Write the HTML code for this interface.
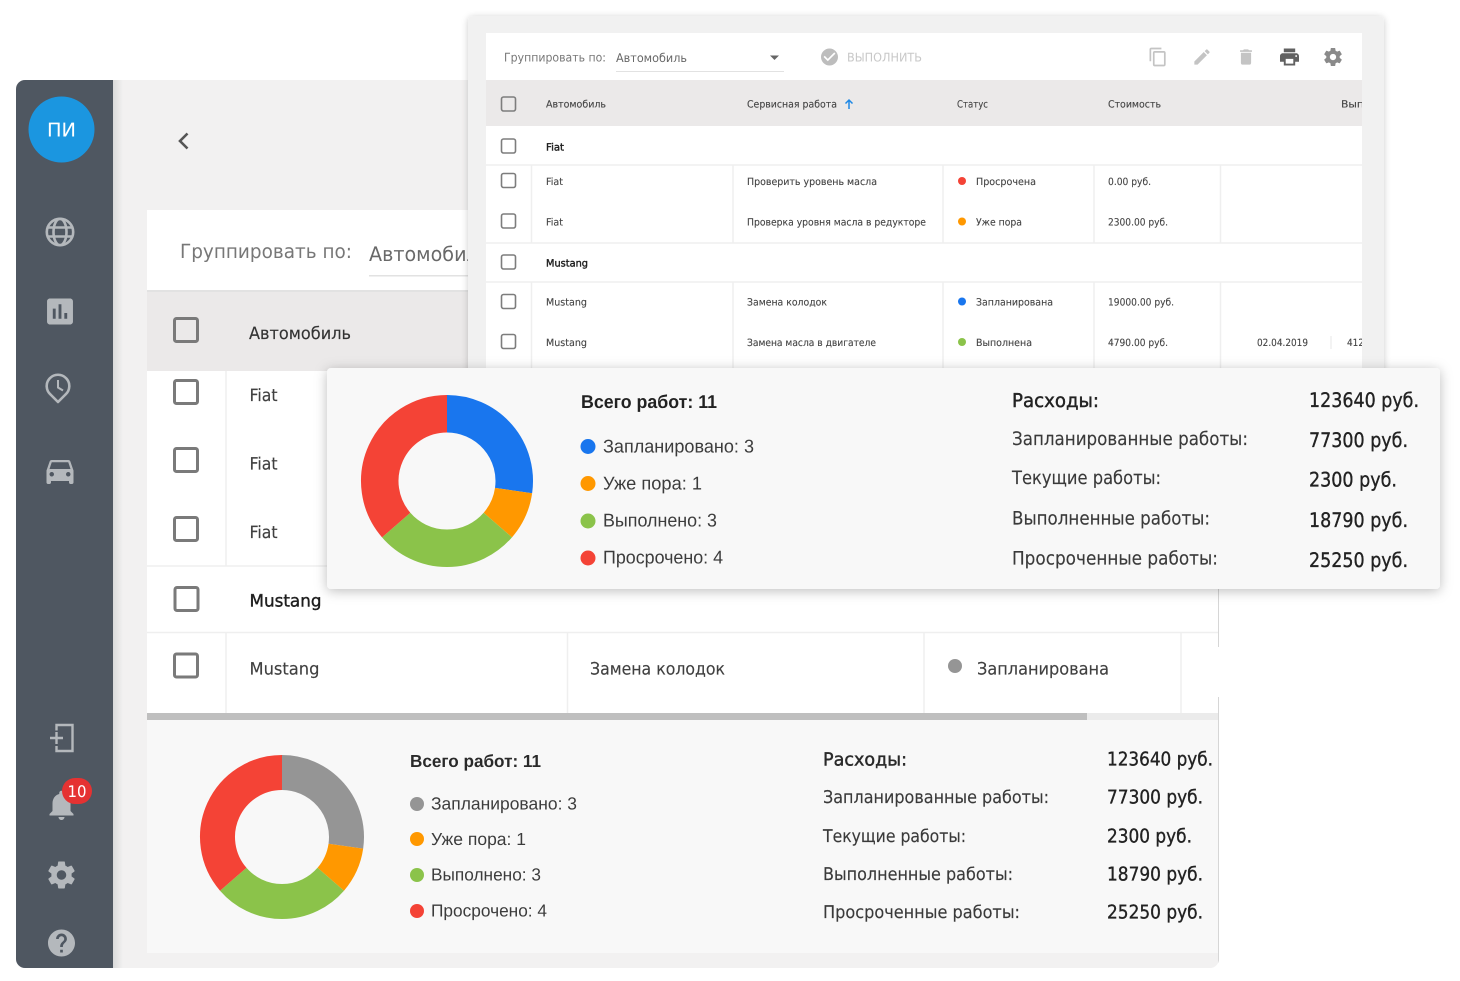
<!DOCTYPE html>
<html lang="ru">
<head>
<meta charset="utf-8">
<title>Работы</title>
<style>
html,body{margin:0;padding:0;background:#fff;width:1460px;height:981px;overflow:hidden}
svg{display:block;filter:blur(.3px)}
text{font-family:"DejaVu Sans","Liberation Sans",sans-serif;fill:#4a4a4a;text-rendering:geometricPrecision}
.h{font-family:"Liberation Sans","DejaVu Sans",sans-serif;fill:#3c3c3c}
.f{font-size:10px;fill:#444;stroke:#444;stroke-width:.12}
.bk{font-size:17px;fill:#404040;stroke:#404040;stroke-width:.15}
.lb{font-size:17.5px;fill:#3a3a3a;stroke:#3a3a3a;stroke-width:.15}
.lb2{font-size:18.5px;fill:#3a3a3a;stroke:#3a3a3a;stroke-width:.15}
.v{font-size:19px;fill:#222;stroke:#222;stroke-width:.35}
.v2{font-size:20px;fill:#222;stroke:#222;stroke-width:.35}
.cb{fill:none;stroke:#7d7d7d;stroke-width:1.6}
.cbb{fill:none;stroke:#7a7a7a;stroke-width:3}
.l{stroke:#efefef;stroke-width:1.5}
.ic{fill:#b4b8bc}
</style>
</head>
<body>
<svg width="1460" height="981" viewBox="0 0 1460 981" xmlns="http://www.w3.org/2000/svg">
<defs>
<filter id="sw" x="-5%" y="-5%" width="110%" height="110%"><feDropShadow dx="0" dy="1" stdDeviation="3.5" flood-color="#000" flood-opacity=".2"/></filter>
<filter id="sp" x="-5%" y="-10%" width="110%" height="120%"><feDropShadow dx="0" dy="2" stdDeviation="6" flood-color="#000" flood-opacity=".26"/></filter>
<linearGradient id="gs" x1="0" x2="1" y1="0" y2="0"><stop offset="0" stop-color="#dadada"/><stop offset="1" stop-color="#f2f1f1"/></linearGradient>
<clipPath id="fc"><rect x="486" y="33" width="876" height="340"/></clipPath>
<clipPath id="bc"><rect x="16" y="80" width="1203" height="888" rx="9"/></clipPath>
</defs>

<!-- BACK WINDOW -->
<g clip-path="url(#bc)">
<rect x="16" y="80" width="1203" height="888" fill="#f2f1f1"/>
<rect x="113" y="80" width="10" height="888" fill="url(#gs)"/>
<rect x="16" y="80" width="97" height="888" fill="#4f5761"/>
<rect x="147" y="210" width="1072" height="743" fill="#fff"/>
<rect x="147" y="290" width="1072" height="2" fill="#e2e2e2"/>
<rect x="147" y="292" width="1072" height="79" fill="#ebe9e9"/>
<rect x="147" y="720" width="1072" height="233" fill="#f8f8f8"/>
<rect x="147" y="713" width="940" height="7" fill="#bfbfbf"/>
<rect x="1087" y="713" width="132" height="7" fill="#ebebeb"/>
<path class="l" d="M147 566H1219M147 632.500H1219M226 371V566M226 633V713M567.500 633V713M924 633V713M1181 633V713" fill="none"/>
<rect x="1218" y="589" width="1" height="58" fill="#d6d6d6"/>
<rect x="1218" y="697" width="1" height="271" fill="#d6d6d6"/>
</g>

<!-- sidebar -->
<circle cx="61.500" cy="129.500" r="33" fill="#1b96e0"/>
<text x="47" y="136.500" font-size="19" textLength="29" lengthAdjust="spacingAndGlyphs" style="fill:#fff">ПИ</text>
<g fill="none" stroke="#b4b8bc" stroke-width="2.600">
<circle cx="60" cy="232" r="13.200"/>
<ellipse cx="60" cy="232" rx="6.500" ry="13.200"/>
<path d="M47.500 227.500H72.500M47.500 236.500H72.500"/>
</g>
<path class="ic" transform="translate(42.720 294.220) scale(1.440)" d="M19 3H5c-1.100 0-2 .9-2 2v14c0 1.100.9 2 2 2h14c1.100 0 2-.9 2-2V5c0-1.100-.9-2-2-2zM9 17H7v-7h2v7zm4 0h-2V7h2v10zm4 0h-2v-4h2v4z"/>
<g fill="none" stroke="#b4b8bc" stroke-width="2.600">
<path d="M58 402 L50.500 394.500 A11.300 11.300 0 1 1 65.500 394.500 Z" stroke-linejoin="round"/>
<path d="M58 380V387.500L63 390.500" stroke-width="2"/>
</g>
<path class="ic" transform="translate(42 452.500) scale(1.500)" d="M18.920 6.010C18.720 5.420 18.160 5 17.500 5h-11c-.66 0-1.210.42-1.420 1.010L3 12v8c0 .55.45 1 1 1h1c.55 0 1-.45 1-1v-1h12v1c0 .55.45 1 1 1h1c.55 0 1-.45 1-1v-8l-2.080-5.990zM6.500 16c-.83 0-1.500-.67-1.500-1.500S5.670 13 6.500 13s1.500.67 1.500 1.500S7.330 16 6.500 16zm11 0c-.83 0-1.500-.67-1.500-1.500s.67-1.500 1.500-1.500 1.500.67 1.500 1.500-.67 1.500-1.500 1.500zM5 11l1.500-4.500h11L19 11H5z"/>
<g fill="none" stroke="#b4b8bc" stroke-width="2.400">
<path d="M56.500 730.500V725H72.500V751H56.500V746"/>
<path d="M50 738H63M56.500 732V744"/>
</g>
<path class="ic" transform="translate(43.500 787) scale(1.500)" d="M12 22c1.100 0 2-.9 2-2h-4c0 1.100.9 2 2 2zm6-6v-5c0-3.070-1.630-5.640-4.500-6.320V4c0-.83-.67-1.500-1.500-1.500s-1.500.67-1.500 1.500v.68C7.640 5.360 6 7.920 6 11v5l-2 2v1h16v-1l-2-2z"/>
<rect x="62" y="778" width="30" height="26" rx="13" fill="#e53232"/>
<text x="67.500" y="797" font-size="16" textLength="19" lengthAdjust="spacingAndGlyphs" style="fill:#fff">10</text>
<path class="ic" transform="translate(45.300 858.800) scale(1.350)" d="M19.430 12.980c.04-.32.07-.64.07-.98s-.03-.66-.07-.98l2.110-1.650c.19-.15.24-.42.12-.64l-2-3.460c-.12-.22-.39-.3-.61-.22l-2.490 1c-.52-.4-1.080-.73-1.690-.98l-.38-2.650C14.460 2.180 14.250 2 14 2h-4c-.25 0-.46.18-.49.42l-.38 2.650c-.61.25-1.170.59-1.690.98l-2.490-1c-.23-.09-.49 0-.61.22l-2 3.460c-.13.22-.07.49.12.64l2.110 1.650c-.04.32-.07.65-.07.98s.03.66.07.98l-2.110 1.650c-.19.15-.24.42-.12.64l2 3.460c.12.22.39.3.61.22l2.490-1c.52.4 1.080.73 1.690.98l.38 2.650c.03.24.24.42.49.42h4c.25 0 .46-.18.49-.42l.38-2.650c.61-.25 1.170-.59 1.690-.98l2.490 1c.23.09.49 0 .61-.22l2-3.460c.12-.22.07-.49-.12-.64l-2.110-1.650zM12 15.500c-1.930 0-3.500-1.570-3.500-3.500s1.570-3.500 3.500-3.500 3.500 1.570 3.500 3.500-1.570 3.500-3.500 3.500z"/>
<path class="ic" transform="translate(45.300 926.800) scale(1.350)" d="M12 2C6.480 2 2 6.480 2 12s4.480 10 10 10 10-4.480 10-10S17.520 2 12 2zm1 17h-2v-2h2v2zm2.070-7.750l-.9.92C13.450 12.900 13 13.500 13 15h-2v-.5c0-1.100.45-2.100 1.170-2.830l1.240-1.260c.37-.36.59-.86.59-1.410 0-1.100-.9-2-2-2s-2 .9-2 2H8c0-2.210 1.790-4 4-4s4 1.790 4 4c0 .88-.36 1.680-.93 2.250z"/>

<!-- back content -->
<path d="M187.500 133.500L180 141L187.500 148.500" fill="none" stroke="#555" stroke-width="2.600"/>
<text x="180" y="258" font-size="19.500" textLength="172" lengthAdjust="spacingAndGlyphs" style="fill:#777">Группировать по:</text>
<text x="369" y="261" font-size="20" textLength="121" lengthAdjust="spacingAndGlyphs" style="fill:#696969">Автомобиль</text>
<rect x="369" y="275" width="110" height="1.500" fill="#e2e2e2"/>
<rect class="cbb" x="174.500" y="318.500" width="23" height="23" rx="2"/>
<text class="bk" x="249" y="339" textLength="102" lengthAdjust="spacingAndGlyphs" style="fill:#333;stroke:#333">Автомобиль</text>
<rect class="cbb" x="174.500" y="380.500" width="23" height="23" rx="2"/>
<rect class="cbb" x="174.500" y="448.500" width="23" height="23" rx="2"/>
<rect class="cbb" x="174.500" y="517.500" width="23" height="23" rx="2"/>
<rect class="cbb" x="175" y="587.500" width="23" height="23" rx="2"/>
<rect class="cbb" x="174.500" y="654" width="23" height="23" rx="2"/>
<text class="bk" x="249.500" y="401" textLength="28" lengthAdjust="spacingAndGlyphs">Fiat</text>
<text class="bk" x="249.500" y="469.500" textLength="28" lengthAdjust="spacingAndGlyphs">Fiat</text>
<text class="bk" x="249.500" y="538" textLength="28" lengthAdjust="spacingAndGlyphs">Fiat</text>
<text class="bk" x="249.500" y="606.500" textLength="72" lengthAdjust="spacingAndGlyphs" style="fill:#1e1e1e;stroke:#1e1e1e;stroke-width:.4">Mustang</text>
<text class="bk" x="249.500" y="674.500" textLength="70" lengthAdjust="spacingAndGlyphs">Mustang</text>
<text class="bk" x="590" y="674.500" textLength="135" lengthAdjust="spacingAndGlyphs">Замена колодок</text>
<circle cx="955" cy="666" r="7" fill="#959595"/>
<text class="bk" x="977" y="674.500" textLength="132" lengthAdjust="spacingAndGlyphs">Запланирована</text>

<!-- back summary -->
<g fill="none" stroke-width="35">
<path stroke="#959595" d="M282 772.500A64.500 64.500 0 0 1 345.840 846.180"/>
<path stroke="#ff9800" d="M345.840 846.180A64.500 64.500 0 0 1 330.750 879.240"/>
<path stroke="#8bc34a" d="M330.750 879.240A64.500 64.500 0 0 1 233.250 879.240"/>
<path stroke="#f44336" d="M233.250 879.240A64.500 64.500 0 0 1 282 772.500"/>
</g>
<text class="h" x="410" y="767" font-size="17.500" textLength="131" lengthAdjust="spacingAndGlyphs" style="font-weight:700;fill:#2a2a2a">Всего работ: 11</text>
<circle cx="417" cy="804" r="7" fill="#959595"/><text class="h" x="431" y="809.500" font-size="17.500" textLength="146" lengthAdjust="spacingAndGlyphs">Запланировано: 3</text>
<circle cx="417" cy="839" r="7" fill="#ff9800"/><text class="h" x="431" y="845" font-size="17.500" textLength="95" lengthAdjust="spacingAndGlyphs">Уже пора: 1</text>
<circle cx="417" cy="875" r="7" fill="#8bc34a"/><text class="h" x="431" y="880.500" font-size="17.500" textLength="110" lengthAdjust="spacingAndGlyphs">Выполнено: 3</text>
<circle cx="417" cy="911" r="7" fill="#f44336"/><text class="h" x="431" y="916.500" font-size="17.500" textLength="116" lengthAdjust="spacingAndGlyphs">Просрочено: 4</text>

<text x="823" y="765.500" font-size="18" textLength="84" lengthAdjust="spacingAndGlyphs" style="fill:#2a2a2a;stroke:#2a2a2a;stroke-width:.45">Расходы:</text>
<text class="lb" x="823" y="803" textLength="226" lengthAdjust="spacingAndGlyphs">Запланированные работы:</text>
<text class="lb" x="823" y="842" textLength="143" lengthAdjust="spacingAndGlyphs">Текущие работы:</text>
<text class="lb" x="823" y="880" textLength="190" lengthAdjust="spacingAndGlyphs">Выполненные работы:</text>
<text class="lb" x="823" y="918" textLength="197" lengthAdjust="spacingAndGlyphs">Просроченные работы:</text>
<text class="v" x="1107" y="765.500" textLength="106" lengthAdjust="spacingAndGlyphs">123640 руб.</text>
<text class="v" x="1107" y="803.500" textLength="96" lengthAdjust="spacingAndGlyphs">77300 руб.</text>
<text class="v" x="1107" y="842.500" textLength="85" lengthAdjust="spacingAndGlyphs">2300 руб.</text>
<text class="v" x="1107" y="880.500" textLength="96" lengthAdjust="spacingAndGlyphs">18790 руб.</text>
<text class="v" x="1107" y="918.500" textLength="96" lengthAdjust="spacingAndGlyphs">25250 руб.</text>

<!-- FRONT WINDOW -->
<rect x="468" y="16" width="916" height="370" rx="5" fill="#f1f1f1" filter="url(#sw)"/>
<rect x="486" y="33" width="876" height="345" fill="#fff"/>
<rect x="486" y="80" width="876" height="46" fill="#ebe9e9"/>
<path class="l" d="M486 165H1362M486 243H1362M486 282H1362M531.500 165V243M531.500 282V370M733 165V243M733 282V370M943 165V243M943 282V370M1094 165V243M1094 282V370M1220.500 165V243M1220.500 282V370M1331 336V349" fill="none"/>

<text x="504" y="61.500" font-size="12" textLength="102" lengthAdjust="spacingAndGlyphs" style="fill:#777">Группировать по:</text>
<text x="616" y="62" font-size="12" textLength="71" lengthAdjust="spacingAndGlyphs" style="fill:#666">Автомобиль</text>
<rect x="616" y="71" width="168" height="1" fill="#e2e2e2"/>
<path d="M770 55.500H779L774.500 60Z" fill="#666"/>
<path transform="translate(819.300 46.800) scale(.85)" fill="#bdbdbd" d="M12 2C6.480 2 2 6.480 2 12s4.480 10 10 10 10-4.480 10-10S17.520 2 12 2zm-2 15l-5-5 1.410-1.410L10 14.170l7.590-7.590L19 8l-9 9z"/>
<text x="847" y="61.500" font-size="12" textLength="75" lengthAdjust="spacingAndGlyphs" style="fill:#c8c8c8">ВЫПОЛНИТЬ</text>
<path transform="translate(1147.800 46.800) scale(.85)" fill="#c4c4c4" d="M16 1H4c-1.100 0-2 .9-2 2v14h2V3h12V1zm3 4H8c-1.100 0-2 .9-2 2v14c0 1.100.9 2 2 2h11c1.100 0 2-.9 2-2V7c0-1.100-.9-2-2-2zm0 16H8V7h11v14z"/>
<path transform="translate(1191.800 46.800) scale(.85)" fill="#c4c4c4" d="M3 17.250V21h3.750L17.810 9.940l-3.750-3.750L3 17.250zM20.710 7.040c.39-.39.39-1.020 0-1.410l-2.340-2.340c-.39-.39-1.020-.39-1.410 0l-1.830 1.830 3.750 3.750 1.830-1.830z"/>
<path transform="translate(1235.800 46.800) scale(.85)" fill="#c4c4c4" d="M6 19c0 1.100.9 2 2 2h8c1.100 0 2-.9 2-2V7H6v12zM19 4h-3.500l-1-1h-5l-1 1H5v2h14V4z"/>
<path transform="translate(1278.100 45.600) scale(.95)" fill="#616161" d="M19 8H5c-1.660 0-3 1.340-3 3v6h4v4h12v-4h4v-6c0-1.660-1.340-3-3-3zm-3 11H8v-5h8v5zm3-7c-.55 0-1-.45-1-1s.45-1 1-1 1 .45 1 1-.45 1-1 1zm-1-9H6v4h12V3z"/>
<path transform="translate(1322.200 46.200) scale(.9)" fill="#8a8a8a" d="M19.430 12.980c.04-.32.07-.64.07-.98s-.03-.66-.07-.98l2.110-1.650c.19-.15.24-.42.12-.64l-2-3.460c-.12-.22-.39-.3-.61-.22l-2.490 1c-.52-.4-1.080-.73-1.690-.98l-.38-2.650C14.460 2.180 14.250 2 14 2h-4c-.25 0-.46.18-.49.42l-.38 2.650c-.61.25-1.170.59-1.690.98l-2.490-1c-.23-.09-.49 0-.61.22l-2 3.460c-.13.22-.07.49.12.64l2.110 1.650c-.04.32-.07.65-.07.98s.03.66.07.98l-2.110 1.650c-.19.15-.24.42-.12.64l2 3.460c.12.22.39.3.61.22l2.490-1c.52.4 1.080.73 1.690.98l.38 2.650c.03.24.24.42.49.42h4c.25 0 .46-.18.49-.42l.38-2.650c.61-.25 1.170-.59 1.690-.98l2.490 1c.23.09.49 0 .61-.22l2-3.460c.12-.22.07-.49-.12-.64l-2.110-1.650zM12 15.500c-1.930 0-3.500-1.570-3.500-3.500s1.570-3.500 3.500-3.500 3.500 1.570 3.500 3.500-1.570 3.500-3.500 3.500z"/>

<g clip-path="url(#fc)">
<rect class="cb" x="501.500" y="97" width="14" height="14" rx="2"/>
<rect class="cb" x="501.500" y="139" width="14" height="14" rx="2"/>
<rect class="cb" x="501.500" y="173.500" width="14" height="14" rx="2"/>
<rect class="cb" x="501.500" y="214" width="14" height="14" rx="2"/>
<rect class="cb" x="501.500" y="255" width="14" height="14" rx="2"/>
<rect class="cb" x="501.500" y="294.500" width="14" height="14" rx="2"/>
<rect class="cb" x="501.500" y="334.500" width="14" height="14" rx="2"/>

<text class="f" x="546" y="107.500" textLength="60" lengthAdjust="spacingAndGlyphs">Автомобиль</text>
<text class="f" x="747" y="107.500" textLength="90" lengthAdjust="spacingAndGlyphs">Сервисная работа</text>
<path d="M849 109V100M845.500 103.500L849 100L852.500 103.500" fill="none" stroke="#1e88e5" stroke-width="1.500"/>
<text class="f" x="957" y="107.500" textLength="31" lengthAdjust="spacingAndGlyphs">Статус</text>
<text class="f" x="1108" y="107.500" textLength="53" lengthAdjust="spacingAndGlyphs">Стоимость</text>
<text class="f" x="1341" y="107.500" textLength="23" lengthAdjust="spacingAndGlyphs">Вып</text>

<text class="f" x="546" y="150.500" textLength="18" lengthAdjust="spacingAndGlyphs" style="fill:#1e1e1e;stroke:#1e1e1e;stroke-width:.4">Fiat</text>
<text class="f" x="546" y="185" textLength="17" lengthAdjust="spacingAndGlyphs">Fiat</text>
<text class="f" x="747" y="185" textLength="130" lengthAdjust="spacingAndGlyphs">Проверить уровень масла</text>
<circle cx="962" cy="181" r="4" fill="#f44336"/>
<text class="f" x="976" y="185" textLength="60" lengthAdjust="spacingAndGlyphs">Просрочена</text>
<text class="f" x="1108" y="185" textLength="43" lengthAdjust="spacingAndGlyphs">0.00 руб.</text>

<text class="f" x="546" y="225.500" textLength="17" lengthAdjust="spacingAndGlyphs">Fiat</text>
<text class="f" x="747" y="225.500" textLength="179" lengthAdjust="spacingAndGlyphs">Проверка уровня масла в редукторе</text>
<circle cx="962" cy="221.500" r="4" fill="#ff9800"/>
<text class="f" x="976" y="225.500" textLength="46" lengthAdjust="spacingAndGlyphs">Уже пора</text>
<text class="f" x="1108" y="225.500" textLength="60" lengthAdjust="spacingAndGlyphs">2300.00 руб.</text>

<text class="f" x="546" y="266.500" textLength="42" lengthAdjust="spacingAndGlyphs" style="fill:#1e1e1e;stroke:#1e1e1e;stroke-width:.4">Mustang</text>
<text class="f" x="546" y="305.500" textLength="41" lengthAdjust="spacingAndGlyphs">Mustang</text>
<text class="f" x="747" y="305.500" textLength="80" lengthAdjust="spacingAndGlyphs">Замена колодок</text>
<circle cx="962" cy="301.500" r="4" fill="#1976ee"/>
<text class="f" x="976" y="305.500" textLength="77" lengthAdjust="spacingAndGlyphs">Запланирована</text>
<text class="f" x="1108" y="305.500" textLength="66" lengthAdjust="spacingAndGlyphs">19000.00 руб.</text>

<text class="f" x="546" y="346" textLength="41" lengthAdjust="spacingAndGlyphs">Mustang</text>
<text class="f" x="747" y="346" textLength="129" lengthAdjust="spacingAndGlyphs">Замена масла в двигателе</text>
<circle cx="962" cy="342" r="4" fill="#8bc34a"/>
<text class="f" x="976" y="346" textLength="56" lengthAdjust="spacingAndGlyphs">Выполнена</text>
<text class="f" x="1108" y="346" textLength="60" lengthAdjust="spacingAndGlyphs">4790.00 руб.</text>
<text class="f" x="1257" y="346" textLength="51" lengthAdjust="spacingAndGlyphs">02.04.2019</text>
<text class="f" x="1347" y="346" textLength="17" lengthAdjust="spacingAndGlyphs">412</text>
</g>

<!-- POPUP -->
<rect x="327" y="368" width="1113" height="221" rx="4" fill="#f8f8f8" filter="url(#sp)"/>
<g fill="none" stroke-width="37.500">
<path stroke="#1976ee" d="M447 413.750A67.250 67.250 0 0 1 513.570 490.570"/>
<path stroke="#ff9800" d="M513.570 490.570A67.250 67.250 0 0 1 497.820 525.040"/>
<path stroke="#8bc34a" d="M497.820 525.040A67.250 67.250 0 0 1 396.180 525.040"/>
<path stroke="#f44336" d="M396.180 525.040A67.250 67.250 0 0 1 447 413.750"/>
</g>
<text class="h" x="581" y="408" font-size="18.500" textLength="136" lengthAdjust="spacingAndGlyphs" style="font-weight:700;fill:#222">Всего работ: 11</text>
<circle cx="588" cy="446.500" r="7.500" fill="#1976ee"/><text class="h" x="603" y="452.500" font-size="18.500" textLength="151" lengthAdjust="spacingAndGlyphs">Запланировано: 3</text>
<circle cx="588" cy="483.500" r="7.500" fill="#ff9800"/><text class="h" x="603" y="489.500" font-size="18.500" textLength="99" lengthAdjust="spacingAndGlyphs">Уже пора: 1</text>
<circle cx="588" cy="521" r="7.500" fill="#8bc34a"/><text class="h" x="603" y="526.500" font-size="18.500" textLength="114" lengthAdjust="spacingAndGlyphs">Выполнено: 3</text>
<circle cx="588" cy="558" r="7.500" fill="#f44336"/><text class="h" x="603" y="563.500" font-size="18.500" textLength="120" lengthAdjust="spacingAndGlyphs">Просрочено: 4</text>

<text x="1012" y="407" font-size="19" textLength="87" lengthAdjust="spacingAndGlyphs" style="fill:#222;stroke:#222;stroke-width:.45">Расходы:</text>
<text class="lb2" x="1012" y="445" textLength="236" lengthAdjust="spacingAndGlyphs">Запланированные работы:</text>
<text class="lb2" x="1012" y="484" textLength="149" lengthAdjust="spacingAndGlyphs">Текущие работы:</text>
<text class="lb2" x="1012" y="524.500" textLength="198" lengthAdjust="spacingAndGlyphs">Выполненные работы:</text>
<text class="lb2" x="1012" y="564.500" textLength="206" lengthAdjust="spacingAndGlyphs">Просроченные работы:</text>
<text class="v2" x="1309" y="407" textLength="110" lengthAdjust="spacingAndGlyphs">123640 руб.</text>
<text class="v2" x="1309" y="447" textLength="99" lengthAdjust="spacingAndGlyphs">77300 руб.</text>
<text class="v2" x="1309" y="486.500" textLength="88" lengthAdjust="spacingAndGlyphs">2300 руб.</text>
<text class="v2" x="1309" y="527" textLength="99" lengthAdjust="spacingAndGlyphs">18790 руб.</text>
<text class="v2" x="1309" y="567" textLength="99" lengthAdjust="spacingAndGlyphs">25250 руб.</text>
</svg>
</body>
</html>
